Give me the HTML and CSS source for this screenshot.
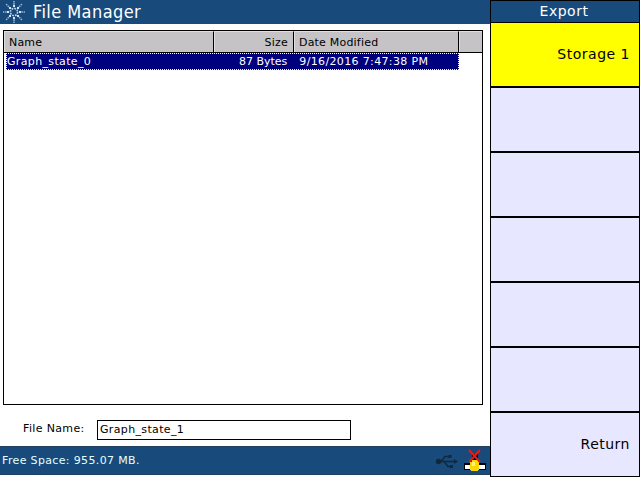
FILE: index.html
```html
<!DOCTYPE html>
<html lang="en">
<head>
<meta charset="utf-8">
<title>File Manager</title>
<link rel="stylesheet" href="styles.css">
</head>
<body>
<div class="screen">
  <main class="manager">
    <header class="titlebar">
      <svg class="logo" width="26" height="24" viewBox="0 0 26 24">
        <g fill="#d5e4f5">
          <circle cx="13" cy="12" r="3.6" fill="none" stroke="#b9d0ea" stroke-width="1.6" stroke-dasharray="1.8 1"/>
          <g stroke="#8fb2da" stroke-width="1.5" stroke-dasharray="1.6 .7">
            <path d="M13 7V1M13 17v6M8 12H2M18 12h6"/>
            <path d="M9.500 8.500L5 4M16.500 8.500L21 4M9.500 15.500L5 20M16.500 15.500L21 20"/>
          </g>
          <path d="M12 5h2v2h-2zM12 17h2v2h-2zM6 11h2v2H6zM18 11h2v2h-2zM8 7h2v2H8zM16 7h2v2h-2zM8 15h2v2H8zM16 15h2v2h-2z"/>
        </g>
      </svg>
      <h1 class="title">File Manager</h1>
    </header>
    <section class="list">
      <div class="row head">
        <div class="cell name">Name</div>
        <div class="cell size">Size</div>
        <div class="cell date">Date Modified</div>
        <div class="cell rest"></div>
      </div>
      <div class="row file">
        <div class="cell name">Graph_state_0</div>
        <div class="cell size">87 Bytes</div>
        <div class="cell date">9/16/2016 7:47:38 PM</div>
      </div>
    </section>
    <div class="field">
      <span class="label">File Name:</span>
      <div class="input">Graph_state_1</div>
    </div>
    <footer class="status">
      <span class="free">Free Space: 955.07 MB.</span>
      <svg class="usb" width="24" height="18" viewBox="0 0 24 18" fill="none" stroke="#12283c" stroke-width="1.4">
        <path d="M3 9.500H20M6 9.500L10 4.500H14M9 9.500L13 14.500H16"/>
        <circle cx="3.500" cy="9.500" r="2" fill="#12283c"/>
        <path d="M19 7l4 2.500-4 2.500z" fill="#12283c" stroke="none"/>
        <path d="M13.500 3h3v3h-3zM15 13h3v3h-3z" fill="#12283c" stroke="none"/>
      </svg>
      <svg class="net" width="24" height="24" viewBox="0 0 24 24">
        <path d="M1 14h22v7H1z" fill="#000"/>
        <path d="M2 16h20v4H2z" fill="#fff"/>
        <path d="M9 5h6v7H9z" fill="#000"/>
        <path d="M9 11h6v2h1v8h-1v1H8v-1H7v-8h2z" fill="#ffd800"/>
        <path d="M9 13h3v4H9z" fill="#fff27a"/>
        <path d="M6 1L17 13M17 1L6 13" stroke="#f01818" stroke-width="1.9" fill="none"/>
      </svg>
    </footer>
  </main>
  <aside class="menu">
    <div class="menu-title">Export</div>
    <div class="key active">Storage 1</div>
    <div class="key"></div>
    <div class="key"></div>
    <div class="key"></div>
    <div class="key"></div>
    <div class="key"></div>
    <div class="key">Return</div>
  </aside>
</div>
</body>
</html>
```

FILE: styles.css
```css
* { box-sizing: border-box; }
body { margin: 0; background: #fff; }
.screen {
  display: flex;
  width: 640px;
  height: 480px;
  font: 11px/15px "DejaVu Sans", sans-serif;
  letter-spacing: .35px;
  color: #000;
  white-space: nowrap;
  overflow: hidden;
}
.manager { width: 490px; height: 475px; display: flex; flex-direction: column; }
.titlebar {
  height: 24px;
  display: flex;
  align-items: center;
  gap: 6px;
  padding-left: 1px;
  background: #184a7b;
  color: #fff;
}
.title {
  margin: 0;
  font: 18px/26px "DejaVu Sans Condensed", "DejaVu Sans", sans-serif;
  letter-spacing: .42px;
}
.list {
  width: 480px;
  height: 375px;
  margin: 6px 0 0 3px;
  border: 1px solid #000;
}
.row { display: flex; }
.head { height: 22px; background: #c6c3c6; border-bottom: 1px solid #000; line-height: 22px; letter-spacing: .2px; }
.head .cell { border-right: 1px solid #000; border-top: 1px solid #dedede; border-left: 1px solid #dedede; }
.head .rest { border-right: 0; }
.name { width: 210px; padding-left: 4px; }
.size { width: 80px; padding-right: 5px; text-align: right; }
.date { width: 165px; padding-left: 4px; }
.rest { flex: 1; }
.file {
  width: 453px;
  height: 17px;
  margin-left: 2px;
  background: #00007f;
  color: #fff;
  border: 1px dotted #fff;
}
.file .name { width: 207px; padding-left: 0; }
.file .size { padding-right: 6px; letter-spacing: 0; }
.file .date { padding-left: 6px; }
.field { display: flex; margin: 15px 0 0 23px; }
.label { width: 74px; line-height: 18px; }
.input { width: 254px; height: 20px; border: 1px solid #000; padding-left: 2px; line-height: 18px; }
.status {
  height: 29px;
  margin-top: auto;
  display: flex;
  align-items: center;
  padding: 0 3px 0 2px;
  background: #184a7b;
  border-top: 1px solid #21415f;
  border-bottom: 1px solid #21415f;
  color: #e4ffff;
}
.free { flex: 1; }
.usb { margin-right: 4px; }
.menu {
  width: 150px;
  height: 477px;
  border: 1px solid #000;
  background: #000;
  display: flex;
  flex-direction: column;
  font-size: 14px;
  letter-spacing: .5px;
}
.menu-title { height: 21px; margin-bottom: 1px; padding-right: 2px; background: #184a7b; color: #fff; line-height: 21px; text-align: center; }
.key {
  height: 63px;
  margin-bottom: 2px;
  background: #e7e7ff;
  display: flex;
  align-items: center;
  justify-content: flex-end;
  padding-right: 9px;
}
.key:last-child { margin-bottom: 0; }
.active { background: #ff0; }
```
